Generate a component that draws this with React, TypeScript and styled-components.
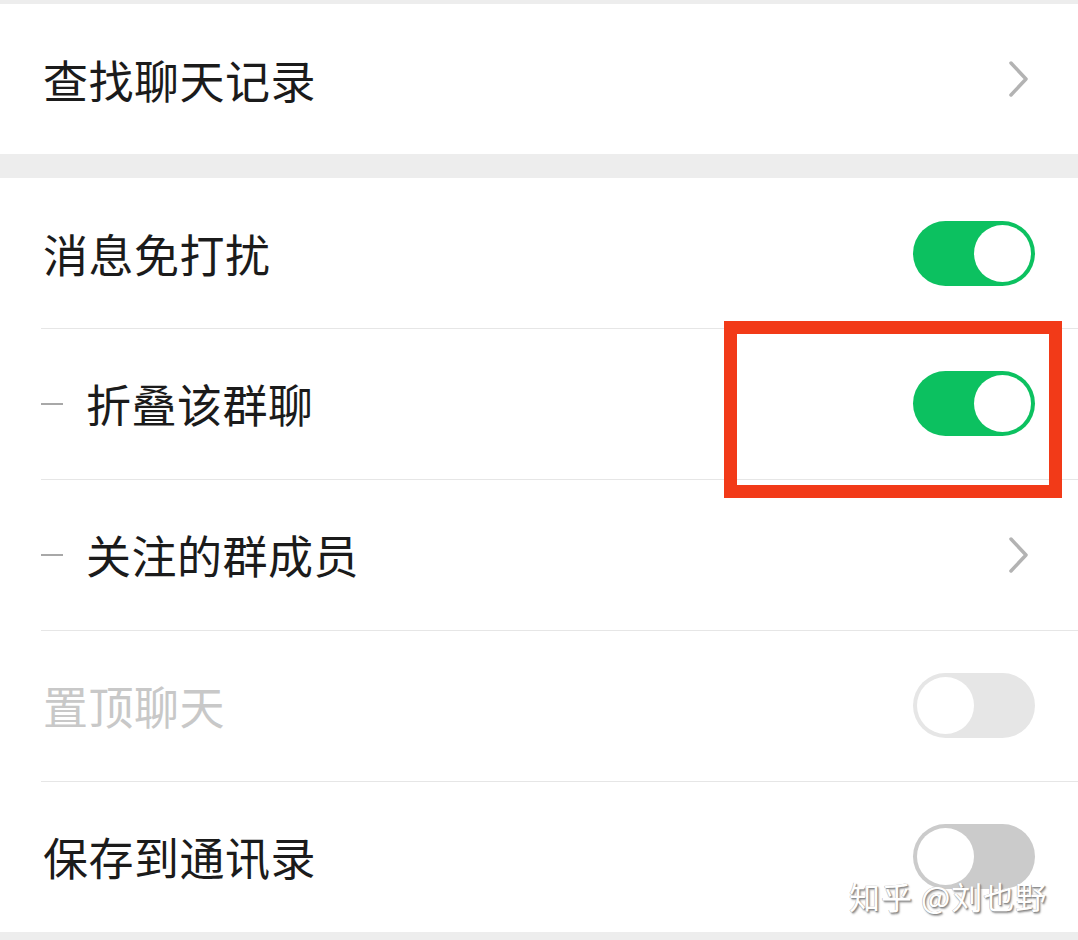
import React from "react";
import styled, { createGlobalStyle } from "styled-components";

const Global = createGlobalStyle`
  html, body { margin: 0; padding: 0; background: #ededed; }
  body { font-family: "Noto Sans CJK SC", "Noto Sans", sans-serif; }
`;

const Page = styled.div`
  position: relative;
  width: 1078px;
  height: 940px;
  overflow: hidden;
  background: #ededed;
  display: flex;
  flex-direction: column;
  padding-top: 4px;
  box-sizing: border-box;
`;

const Group = styled.div<{ $gap?: number }>`
  background: #ffffff;
  margin-bottom: ${(p) => p.$gap ?? 0}px;
  display: flex;
  flex-direction: column;
`;

const Row = styled.div<{ $divider?: boolean }>`
  position: relative;
  height: ${(p) => (p.$divider ? 151 : 150)}px;
  box-sizing: border-box;
  display: flex;
  align-items: center;
  padding: 0 43px;
  ${(p) =>
    p.$divider &&
    `&::before {
      content: "";
      position: absolute;
      top: 0;
      left: 41px;
      right: 0;
      height: 1px;
      background: #e6e6e6;
    }`}
`;

const Label = styled.span<{ $disabled?: boolean }>`
  flex: 1;
  display: flex;
  align-items: center;
  font-size: 45px;
  letter-spacing: 0.5px;
  color: ${(p) => (p.$disabled ? "#c8c8c8" : "#1b1b1b")};
  line-height: 1;
`;

const Dash = styled.span`
  display: inline-block;
  width: 22px;
  height: 2px;
  background: #a8a8a8;
  margin-left: -2px;
  margin-right: 23px;
`;

const Track = styled.div<{ $on?: boolean; $tone?: "on" | "disabled" | "off" }>`
  position: relative;
  width: 122px;
  height: 65px;
  border-radius: 33px;
  display: flex;
  align-items: center;
  justify-content: ${(p) => (p.$on ? "flex-end" : "flex-start")};
  padding: 0 4px;
  box-sizing: border-box;
  background: ${(p) =>
    p.$tone === "on" ? "#0cc160" : p.$tone === "disabled" ? "#e6e6e6" : "#cbcbcb"};
`;

const Knob = styled.div`
  width: 57px;
  height: 57px;
  border-radius: 50%;
  background: #ffffff;
`;

const Chevron = styled.svg`
  width: 22px;
  height: 38px;
  margin-right: 5px;
`;

const Highlight = styled.div`
  position: absolute;
  left: 724px;
  top: 321px;
  width: 338px;
  height: 177px;
  box-sizing: border-box;
  border: 13px solid #f23a18;
`;

const Watermark = styled.div`
  position: absolute;
  left: 849px;
  top: 873px;
  font-size: 31px;
  letter-spacing: 1px;
  color: #ffffff;
  font-family: "Noto Sans CJK SC", sans-serif;
  text-shadow: 1px 1px 1px #8a8a8a, -0.5px -0.5px 0 #b5b5b5, 1.5px 1.5px 2px rgba(0,0,0,0.35);
  white-space: pre;
`;

const BottomGap = styled.div`
  flex: 1;
`;

const Toggle = ({ tone }: { tone: "on" | "disabled" | "off" }) => (
  <Track $on={tone === "on"} $tone={tone}>
    <Knob />
  </Track>
);

const Arrow = () => (
  <Chevron viewBox="0 0 22 38">
    <polyline
      points="3,3 18,19 3,35"
      fill="none"
      stroke="#b3b3b3"
      strokeWidth="3.5"
      strokeLinecap="round"
      strokeLinejoin="round"
    />
  </Chevron>
);

export default function App() {
  return (
    <>
      <Global />
      <Page>
        <Group $gap={24}>
          <Row>
            <Label>查找聊天记录</Label>
            <Arrow />
          </Row>
        </Group>
        <Group>
          <Row>
            <Label>消息免打扰</Label>
            <Toggle tone="on" />
          </Row>
          <Row $divider>
            <Label>
              <Dash />
              折叠该群聊
            </Label>
            <Toggle tone="on" />
          </Row>
          <Row $divider>
            <Label>
              <Dash />
              关注的群成员
            </Label>
            <Arrow />
          </Row>
          <Row $divider>
            <Label $disabled>置顶聊天</Label>
            <Toggle tone="disabled" />
          </Row>
          <Row $divider>
            <Label>保存到通讯录</Label>
            <Toggle tone="off" />
          </Row>
        </Group>
        <BottomGap />
        <Highlight />
        <Watermark>知乎 @刘也野</Watermark>
      </Page>
    </>
  );
}
